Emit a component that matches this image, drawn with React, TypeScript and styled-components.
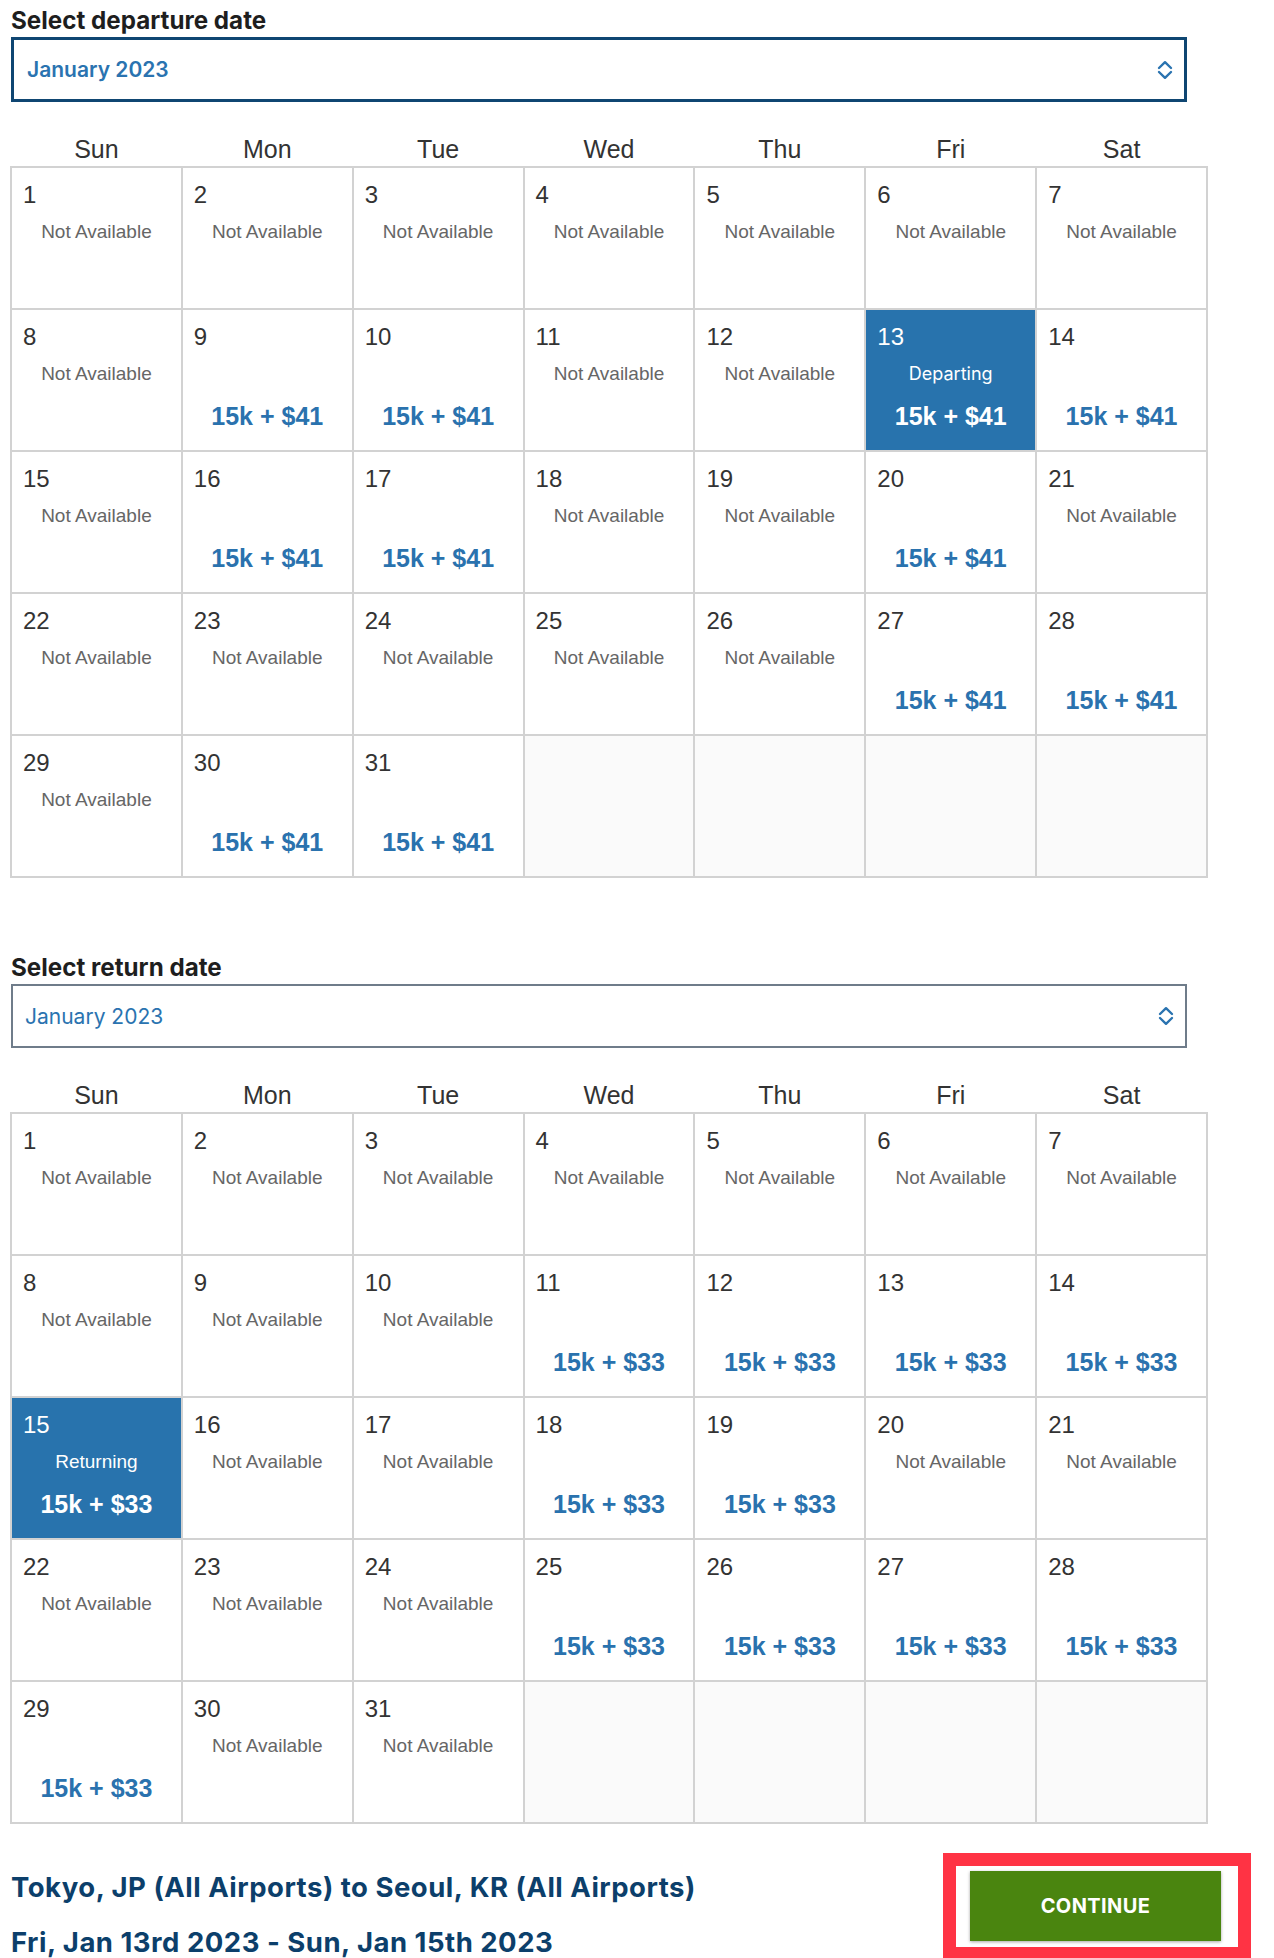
import React from "react";
import styled, { createGlobalStyle, css } from "styled-components";

const GlobalStyle = createGlobalStyle`
  html, body { margin: 0; padding: 0; background: #ffffff; }
  body { font-family: "Liberation Sans", Arial, sans-serif; }
  * { box-sizing: border-box; }
`;

const Page = styled.div`
  padding: 6px 0 0 10px;
  width: 1274px;
`;

const Section = styled.section<{ $offset?: number }>`
  margin-top: ${(p) => p.$offset ?? 0}px;
`;

const Title = styled.h2`
  margin: 0 0 1px 1px;
  font-family: Inter, "Liberation Sans", sans-serif;
  font-weight: 700;
  font-size: 24.2px;
  line-height: 30px;
  color: #1e1e1e;
`;

const Select = styled.div<{ $active?: boolean }>`
  width: 1176px;
  height: ${(p) => (p.$active ? 65 : 64)}px;
  margin-left: 1px;
  display: flex;
  align-items: center;
  justify-content: space-between;
  padding: 0 11px 0 13px;
  background: #fff;
  ${(p) =>
    p.$active
      ? css`
          border: 3px solid #0f4672;
        `
      : css`
          border: 2px solid #6f7c8a;
          padding-left: 12px;
        `}
`;

const SelectText = styled.span<{ $active?: boolean }>`
  font-family: Inter, "Liberation Sans", sans-serif;
  font-size: 21px;
  font-weight: ${(p) => (p.$active ? 600 : 400)};
  color: #2a73b0;
`;

const Chevron = () => (
  <svg width="16" height="20" viewBox="0 0 16 20" fill="none">
    <path d="M2 8 L8 2.2 L14 8" stroke="#2a73b0" strokeWidth="2.4" strokeLinecap="round" strokeLinejoin="round" />
    <path d="M2 12 L8 17.8 L14 12" stroke="#2a73b0" strokeWidth="2.4" strokeLinecap="round" strokeLinejoin="round" />
  </svg>
);

const Weekdays = styled.div`
  margin-top: 30px;
  width: 1198px;
  height: 34px;
  display: grid;
  grid-template-columns: repeat(7, 1fr);
  column-gap: 2px;
  padding: 0 2px;
`;

const Weekday = styled.div`
  text-align: center;
  font-size: 25px;
  line-height: 34px;
  color: #333;
`;

const Grid = styled.div`
  width: 1198px;
  display: grid;
  grid-template-columns: repeat(7, 1fr);
  grid-auto-rows: 140px;
  gap: 2px;
  border: 2px solid #d2d2d2;
  background: #d2d2d2;
`;

const Cell = styled.div<{ $selected?: boolean; $empty?: boolean }>`
  display: flex;
  flex-direction: column;
  padding: 12px 0 19px 0;
  background: ${(p) => (p.$selected ? "#2873ad" : p.$empty ? "#fafafa" : "#ffffff")};
`;

const DayNum = styled.div<{ $selected?: boolean }>`
  padding-left: 11px;
  font-size: 24px;
  line-height: 30px;
  color: ${(p) => (p.$selected ? "#ffffff" : "#333333")};
`;

const Label = styled.div<{ $selected?: boolean; $geo?: boolean }>`
  margin-top: 11px;
  text-align: center;
  font-size: 19px;
  line-height: 22px;
  color: ${(p) => (p.$selected ? "#ffffff" : "#666666")};
  ${(p) =>
    p.$geo &&
    css`
      font-family: Inter, "Liberation Sans", sans-serif;
      font-size: 18px;
    `}
`;

const Price = styled.div<{ $selected?: boolean }>`
  margin-top: auto;
  text-align: center;
  font-size: 25px;
  font-weight: 700;
  line-height: 30px;
  color: ${(p) => (p.$selected ? "#ffffff" : "#2a72ae")};
`;

const Footer = styled.div`
  margin-top: 29px;
  width: 1241px;
  display: flex;
  justify-content: space-between;
  align-items: flex-start;
`;

const Route = styled.div`
  padding-top: 17px;
  padding-left: 1px;
`;

const RouteLine = styled.div<{ $gap?: number }>`
  margin-top: ${(p) => p.$gap ?? 0}px;
  font-family: Inter, "Liberation Sans", sans-serif;
  font-weight: 700;
  font-size: 27.5px;
  line-height: 34px;
  letter-spacing: 0.5px;
  color: #0c3f6b;
  white-space: nowrap;
`;

const Highlight = styled.div`
  border: 13px solid #ff3344;
  padding: 5px 17px 6px 14px;
  background: #fff;
`;

const ContinueButton = styled.button`
  width: 251px;
  height: 70px;
  border: none;
  background: #4a850f;
  color: #fff;
  font-family: Inter, "Liberation Sans", sans-serif;
  font-weight: 700;
  font-size: 20px;
  letter-spacing: 0.4px;
  box-shadow: 0 1px 3px rgba(0, 0, 0, 0.35);
  cursor: pointer;
`;

const WEEKDAYS = ["Sun", "Mon", "Tue", "Wed", "Thu", "Fri", "Sat"];

type CalProps = {
  available: number[];
  selected: number;
  selectedLabel: string;
  price: string;
  geoLabel?: boolean;
};

const Calendar = ({ available, selected, selectedLabel, price, geoLabel }: CalProps) => {
  const days = Array.from({ length: 35 }, (_, i) => i + 1);
  return (
    <>
      <Weekdays>
        {WEEKDAYS.map((d) => (
          <Weekday key={d}>{d}</Weekday>
        ))}
      </Weekdays>
      <Grid>
        {days.map((d) => {
          if (d > 31) return <Cell key={d} $empty />;
          const isSel = d === selected;
          const isAvail = available.includes(d) || isSel;
          return (
            <Cell key={d} $selected={isSel}>
              <DayNum $selected={isSel}>{d}</DayNum>
              {isSel ? (
                <Label $selected $geo={geoLabel}>
                  {selectedLabel}
                </Label>
              ) : !isAvail ? (
                <Label>Not Available</Label>
              ) : null}
              {isAvail && <Price $selected={isSel}>{price}</Price>}
            </Cell>
          );
        })}
      </Grid>
    </>
  );
};

export default function App() {
  return (
    <>
      <GlobalStyle />
      <Page>
        <Section>
          <Title>Select departure date</Title>
          <Select $active>
            <SelectText $active>January 2023</SelectText>
            <Chevron />
          </Select>
          <Calendar
            available={[9, 10, 14, 16, 17, 20, 27, 28, 30, 31]}
            selected={13}
            selectedLabel="Departing"
            price="15k + $41"
            geoLabel
          />
        </Section>
        <Section $offset={75}>
          <Title>Select return date</Title>
          <Select>
            <SelectText>January 2023</SelectText>
            <Chevron />
          </Select>
          <Calendar
            available={[11, 12, 13, 14, 18, 19, 25, 26, 27, 28, 29]}
            selected={15}
            selectedLabel="Returning"
            price="15k + $33"
          />
        </Section>
        <Footer>
          <Route>
            <RouteLine>Tokyo, JP (All Airports) to Seoul, KR (All Airports)</RouteLine>
            <RouteLine $gap={21}>Fri, Jan 13rd 2023 - Sun, Jan 15th 2023</RouteLine>
          </Route>
          <Highlight>
            <ContinueButton>CONTINUE</ContinueButton>
          </Highlight>
        </Footer>
      </Page>
    </>
  );
}
